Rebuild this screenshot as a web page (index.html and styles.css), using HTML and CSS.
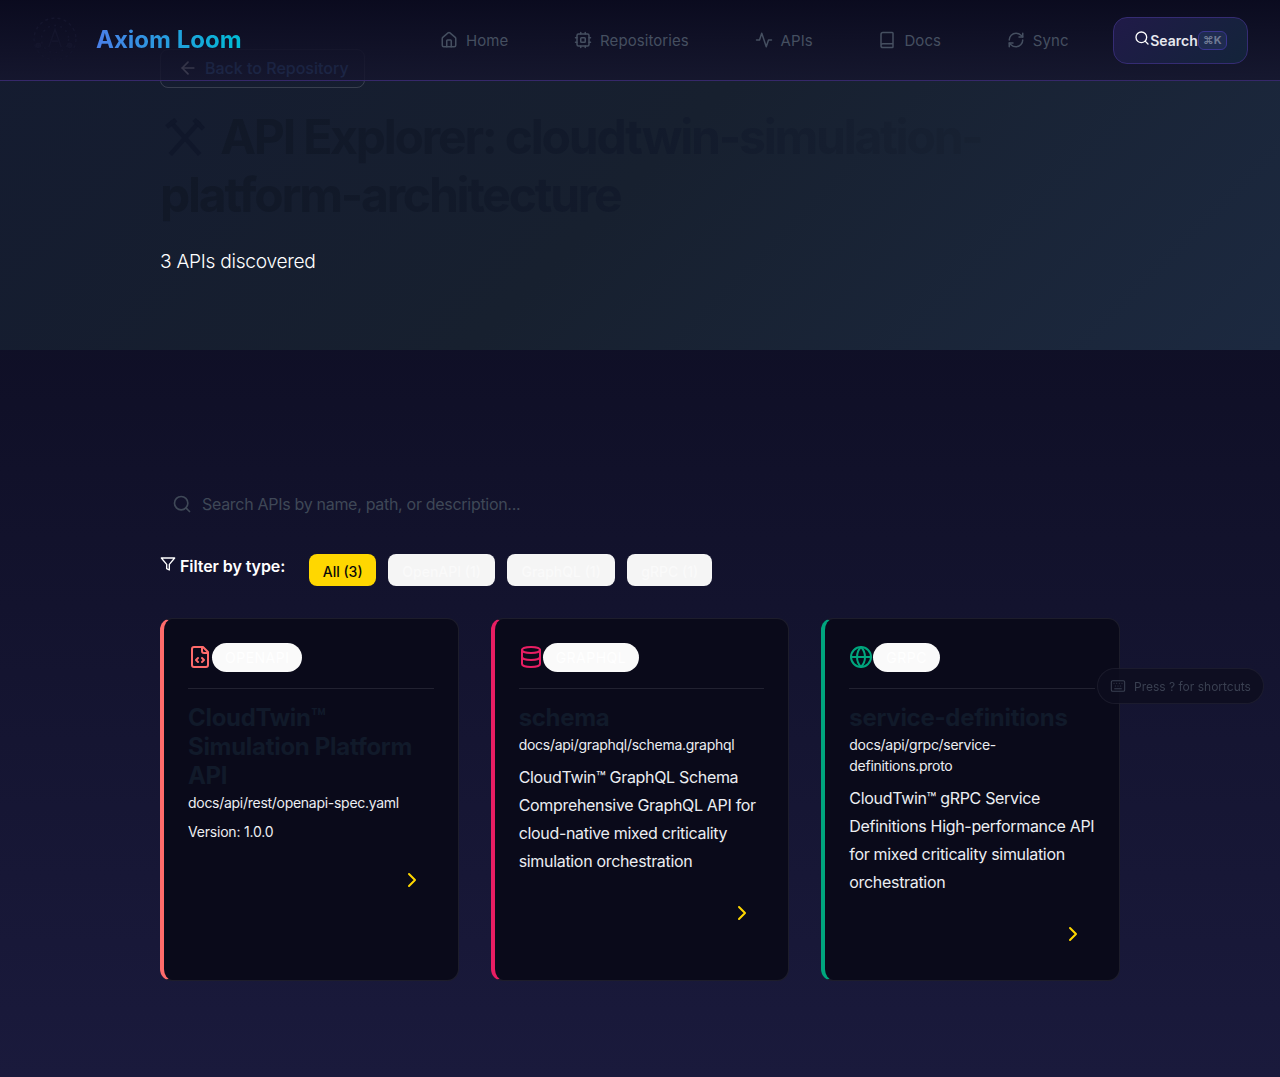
FILE: index.html
```html
<!DOCTYPE html>
<html lang="en">
<head>
  <meta charset="UTF-8">
  <meta name="viewport" content="width=device-width, initial-scale=1.0">
  <title>Axiom Loom</title>
  <link rel="stylesheet" href="styles.css">
</head>
<body>

  <header class="top-bar">
    <div class="brand">
      <svg class="brand-mark" viewBox="0 0 44 44" fill="none" stroke="#14152c" stroke-width="1.5">
        <circle cx="22" cy="22" r="20" stroke-dasharray="3 3"/>
        <circle cx="22" cy="22" r="13" stroke-dasharray="2 4"/>
        <path d="M16 30 L22 13 L28 30 M19 24 H25"/>
        <circle cx="36" cy="28" r="2" fill="#14152c"/>
        <circle cx="6" cy="28" r="2" fill="#14152c"/>
      </svg>
      <span class="brand-name">Axiom Loom</span>
    </div>

    <nav class="nav-links">
      <a class="nav-link">
        <svg class="icon" viewBox="0 0 24 24"><path d="M15 21v-8a1 1 0 0 0-1-1h-4a1 1 0 0 0-1 1v8"/><path d="M3 10a2 2 0 0 1 .709-1.528l7-5.999a2 2 0 0 1 2.582 0l7 5.999A2 2 0 0 1 21 10v9a2 2 0 0 1-2 2H5a2 2 0 0 1-2-2z"/></svg>
        Home
      </a>
      <a class="nav-link">
        <svg class="icon" viewBox="0 0 24 24"><rect x="4" y="4" width="16" height="16" rx="2"/><rect x="9" y="9" width="6" height="6" rx="1"/><path d="M15 2v2M15 20v2M2 15h2M2 9h2M20 15h2M20 9h2M9 2v2M9 20v2"/></svg>
        Repositories
      </a>
      <a class="nav-link">
        <svg class="icon" viewBox="0 0 24 24"><path d="M22 12h-4l-3 9L9 3l-3 9H2"/></svg>
        APIs
      </a>
      <a class="nav-link">
        <svg class="icon" viewBox="0 0 24 24"><path d="M4 19.5v-15A2.5 2.5 0 0 1 6.5 2H19a1 1 0 0 1 1 1v18a1 1 0 0 1-1 1H6.5a1 1 0 0 1 0-5H20"/></svg>
        Docs
      </a>
      <a class="nav-link">
        <svg class="icon" viewBox="0 0 24 24"><path d="M3 12a9 9 0 0 1 9-9 9.75 9.75 0 0 1 6.74 2.74L21 8"/><path d="M21 3v5h-5"/><path d="M21 12a9 9 0 0 1-9 9 9.75 9.75 0 0 1-6.74-2.74L3 16"/><path d="M8 16H3v5"/></svg>
        Sync
      </a>
    </nav>

    <button class="search-button">
      <svg class="icon search-button-icon" viewBox="0 0 24 24"><circle cx="11" cy="11" r="8"/><path d="m21 21-4.3-4.3"/></svg>
      <span>Search</span>
      <kbd class="search-key">⌘K</kbd>
    </button>
  </header>

  <section class="hero">
    <div class="container">
      <a class="back-link">
        <svg class="icon" viewBox="0 0 24 24"><path d="m12 19-7-7 7-7"/><path d="M19 12H5"/></svg>
        Back to Repository
      </a>
      <h1 class="hero-title">
        <svg class="title-icon" viewBox="0 0 24 24"><path d="M4 3 L20 21"/><path d="M20 3 L4 21"/><path d="M2 6 L7 2"/><path d="M17 2 L22 7"/></svg>
        API Explorer: cloudtwin-simulation-platform-architecture
      </h1>
      <p class="hero-sub">3 APIs discovered</p>
    </div>
  </section>

  <main class="container content">

    <div class="api-search">
      <svg class="icon" viewBox="0 0 24 24"><circle cx="11" cy="11" r="8"/><path d="m21 21-4.3-4.3"/></svg>
      <span>Search APIs by name, path, or description...</span>
    </div>

    <div class="filter-row">
      <div class="filter-label">
        <svg class="icon" viewBox="0 0 24 24"><path d="M22 3H2l8 9.46V19l4 2v-8.54L22 3z"/></svg>
        Filter by type:
      </div>
      <button class="filter-button filter-active">All (3)</button>
      <button class="filter-button">OpenAPI (1)</button>
      <button class="filter-button">GraphQL (1)</button>
      <button class="filter-button">gRPC (1)</button>
    </div>

    <div class="card-grid">

      <article class="api-card card-openapi">
        <div class="card-head">
          <svg class="icon card-icon" viewBox="0 0 24 24"><path d="M15 2H6a2 2 0 0 0-2 2v16a2 2 0 0 0 2 2h12a2 2 0 0 0 2-2V7z"/><path d="M14 2v4a2 2 0 0 0 2 2h4"/><path d="m10 13-2 2 2 2"/><path d="m14 17 2-2-2-2"/></svg>
          <span class="badge">OPENAPI</span>
        </div>
        <h3 class="card-title">CloudTwin™ Simulation Platform API</h3>
        <p class="card-path">docs/api/rest/openapi-spec.yaml</p>
        <p class="card-version">Version: 1.0.0</p>
        <div class="card-foot">
          <svg class="icon" viewBox="0 0 24 24"><path d="m9 18 6-6-6-6"/></svg>
        </div>
      </article>

      <article class="api-card card-graphql">
        <div class="card-head">
          <svg class="icon card-icon" viewBox="0 0 24 24"><ellipse cx="12" cy="5" rx="9" ry="3"/><path d="M3 5v14c0 1.66 4 3 9 3s9-1.34 9-3V5"/><path d="M3 12c0 1.66 4 3 9 3s9-1.34 9-3"/></svg>
          <span class="badge">GRAPHQL</span>
        </div>
        <h3 class="card-title">schema</h3>
        <p class="card-path">docs/api/graphql/schema.graphql</p>
        <p class="card-desc">CloudTwin™ GraphQL Schema Comprehensive GraphQL API for cloud-native mixed criticality simulation orchestration</p>
        <div class="card-foot">
          <svg class="icon" viewBox="0 0 24 24"><path d="m9 18 6-6-6-6"/></svg>
        </div>
      </article>

      <article class="api-card card-grpc">
        <div class="card-head">
          <svg class="icon card-icon" viewBox="0 0 24 24"><circle cx="12" cy="12" r="10"/><path d="M12 2a14.5 14.5 0 0 0 0 20 14.5 14.5 0 0 0 0-20"/><path d="M2 12h20"/></svg>
          <span class="badge">GRPC</span>
        </div>
        <h3 class="card-title">service-definitions</h3>
        <p class="card-path">docs/api/grpc/service-definitions.proto</p>
        <p class="card-desc">CloudTwin™ gRPC Service Definitions High-performance API for mixed criticality simulation orchestration</p>
        <div class="card-foot">
          <svg class="icon" viewBox="0 0 24 24"><path d="m9 18 6-6-6-6"/></svg>
        </div>
      </article>

    </div>
  </main>

  <div class="shortcut-hint">
    <svg class="icon" viewBox="0 0 24 24"><path d="M10 8h.01M12 12h.01M14 8h.01M16 12h.01M18 8h.01M6 8h.01M7 16h10M8 12h.01"/><rect x="2" y="4" width="20" height="16" rx="2"/></svg>
    Press ? for shortcuts
  </div>

</body>
</html>
```

FILE: styles.css
```css
* {
  box-sizing: border-box;
}

body {
  margin: 0;
  min-height: 1077px;
  font-family: Inter, "Noto Sans", sans-serif;
  color: #fff;
  background: linear-gradient(180deg, #0a0a1c 0%, #1a1a3c 100%);
}

.icon {
  width: 20px;
  height: 20px;
  flex-shrink: 0;
  fill: none;
  stroke: currentColor;
  stroke-width: 2;
  stroke-linecap: round;
  stroke-linejoin: round;
}

.container {
  width: 960px;
  margin: 0 auto;
}

/* header lies over the hero, the back link shows through it */
.top-bar {
  position: absolute;
  top: 0;
  left: 0;
  width: 100%;
  height: 81px;
  display: flex;
  align-items: center;
  padding: 0 32px;
  background: linear-gradient(180deg, rgba(10, 10, 30, 0.96) 0%, rgba(21, 21, 45, 0.82) 100%);
  border-bottom: 1px solid #36286a;
}

.brand {
  display: flex;
  align-items: center;
  gap: 18px;
  width: 408px;
  margin-top: -2px;
}

.brand-mark {
  width: 46px;
  height: 46px;
}

.brand-name {
  font-size: 24px;
  font-weight: 700;
  background: linear-gradient(90deg, #4a7fe8, #00bcd4);
  -webkit-background-clip: text;
  background-clip: text;
  color: transparent;
}

.nav-links {
  display: flex;
  gap: 65.7px;
  width: 673px;
}

.nav-link {
  display: flex;
  align-items: center;
  gap: 8px;
  font-size: 15px;
  letter-spacing: 0.08px;
  color: #454f60;
}

.nav-link .icon {
  width: 18px;
  height: 18px;
}

.search-button {
  display: flex;
  align-items: center;
  justify-content: center;
  width: 135px;
  height: 47px;
  padding: 0;
  border: 1px solid #352c73;
  border-radius: 14px;
  background: linear-gradient(135deg, #201a48, #13243a);
  color: #e6e8ee;
  font-family: inherit;
  font-size: 14px;
  font-weight: 600;
}

.search-button-icon {
  width: 16px;
  height: 16px;
  margin-top: -5px;
  color: #fff;
}

.search-key {
  width: 29px;
  height: 19px;
  border: 1px solid #3a3590;
  border-radius: 6px;
  background: #1f2c50;
  color: #6f7a93;
  font-family: inherit;
  font-size: 11px;
  font-weight: 700;
  line-height: 17px;
  text-align: center;
}

.hero {
  height: 350px;
  padding-top: 49px;
  background: linear-gradient(135deg, #141b30 0%, #17202f 50%, #1c2940 100%);
}

.back-link {
  display: flex;
  align-items: center;
  gap: 7px;
  width: 205px;
  height: 39px;
  padding: 0 0 2px 17px;
  border: 1px solid rgba(255, 255, 255, 0.15);
  border-radius: 8px;
  font-size: 16px;
  font-weight: 500;
  color: #457dc2;
}

.back-link .icon {
  color: #f0f0f0;
}

.hero-title {
  margin: 20px 0 0;
  font-size: 48px;
  line-height: 58px;
  font-weight: 700;
  letter-spacing: -2.2px;
  background: linear-gradient(90deg, #111827 0%, #121a2b 50%, #182233 90%);
  -webkit-background-clip: text;
  background-clip: text;
  color: transparent;
}

.title-icon {
  width: 50px;
  height: 44px;
  margin-right: 1px;
  fill: none;
  stroke: #10172a;
  stroke-width: 2.5;
  vertical-align: -6px;
}

.hero-sub {
  margin: 22px 0 0;
  font-size: 19.2px;
  line-height: 30px;
  font-weight: 300;
  letter-spacing: -0.3px;
}

.content {
  padding-top: 134px;
}

.api-search {
  display: flex;
  align-items: center;
  gap: 10px;
  height: 40px;
  padding-left: 12px;
  font-size: 16px;
  letter-spacing: -0.3px;
  color: #3f4857;
}

.filter-row {
  display: flex;
  align-items: flex-start;
  gap: 12px;
  margin-top: 30px;
}

.filter-label {
  display: flex;
  align-items: center;
  gap: 4px;
  height: 24px;
  margin-right: 12px;
  font-size: 16px;
  font-weight: 600;
  letter-spacing: -0.08px;
}

.filter-label .icon {
  width: 16px;
  height: 16px;
  margin-top: -4px;
}

.filter-button {
  height: 32px;
  padding: 2px 14.25px 0;
  border: none;
  border-radius: 8px;
  background: #f5f5f5;
  color: #fafafa;
  font-family: inherit;
  font-size: 14px;
  font-weight: 500;
}

.filter-active {
  padding: 2px 13.5px 0;
  background: #ffd700;
  color: #0a0a0a;
}

.card-grid {
  display: grid;
  grid-template-columns: repeat(3, 1fr);
  gap: 32px;
  margin-top: 32px;
}

.api-card {
  height: 363px;
  padding: 24px;
  background: #0a0a1a;
  border: 1px solid rgba(255, 255, 255, 0.08);
  border-left: 4px solid;
  border-radius: 12px;
}

.card-openapi {
  border-left-color: #ff6b6b;
}

.card-graphql {
  border-left-color: #e91e63;
}

.card-grpc {
  border-left-color: #00a67e;
}

.card-head {
  display: flex;
  align-items: center;
  height: 46px;
  padding-bottom: 17px;
  border-bottom: 1px solid rgba(255, 255, 255, 0.1);
}

.card-icon {
  width: 24px;
  height: 24px;
}

.card-openapi .card-icon {
  color: #ff6b6b;
}

.card-graphql .card-icon {
  color: #e91e63;
}

.card-grpc .card-icon {
  color: #00a67e;
}

.badge {
  height: 29px;
  padding: 0 13px;
  border-radius: 15px;
  background: #fafafa;
  color: #fff;
  font-size: 14px;
  line-height: 29px;
  letter-spacing: 0.5px;
}

.card-title {
  margin: 14px 0 0;
  font-size: 24px;
  line-height: 29px;
  font-weight: 700;
  letter-spacing: -0.3px;
  color: #111a2a;
}

.card-path {
  margin: 2px 0 0;
  font-size: 14px;
  line-height: 21px;
  letter-spacing: -0.28px;
  color: #eceef2;
}

.card-version {
  margin: 8px 0 0;
  font-size: 14px;
  line-height: 21px;
  letter-spacing: -0.2px;
  color: #eceef2;
}

.card-desc {
  margin: 8px 0 0;
  font-size: 16px;
  line-height: 28px;
  letter-spacing: -0.32px;
  color: #eceef2;
}

.card-foot {
  display: flex;
  justify-content: flex-end;
  margin-top: 26px;
  padding-right: 10px;
  color: #ffd700;
}

.card-foot .icon {
  width: 24px;
  height: 24px;
}

/* floating hint, sits on top of the third card */
.shortcut-hint {
  position: fixed;
  top: 668px;
  left: 1097px;
  display: flex;
  align-items: center;
  gap: 8px;
  width: 167px;
  height: 36px;
  padding-left: 12px;
  border: 1px solid rgba(255, 255, 255, 0.06);
  border-radius: 18px;
  background: rgba(13, 13, 30, 0.85);
  font-size: 12px;
  color: #3a4051;
}

.shortcut-hint .icon {
  width: 16px;
  height: 16px;
  stroke-width: 1.6;
}
```
